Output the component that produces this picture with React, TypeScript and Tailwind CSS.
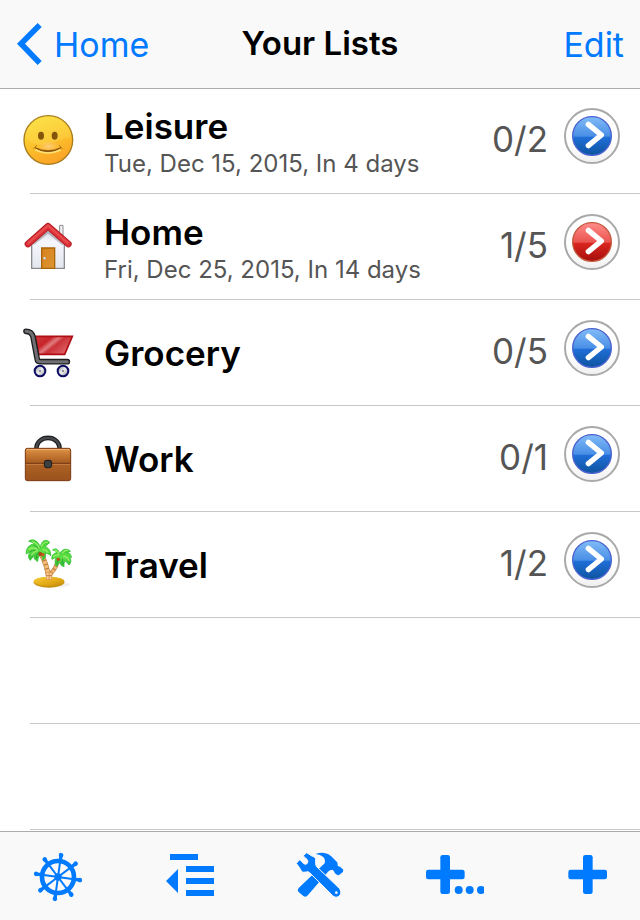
import type { ReactNode } from "react";

interface ListInfo {
  name: string;
  due?: string;
  count: string;
  urgent?: boolean;
  icon: ReactNode;
  viewBox: string;
}

const SmileyIcon = () => (
  <>
    <defs>
      <linearGradient id="smiley-face" x1="0.3" y1="0" x2="0.65" y2="1">
        <stop offset="0" stopColor="#fbe03a" />
        <stop offset="0.5" stopColor="#fbc22b" />
        <stop offset="1" stopColor="#fba026" />
      </linearGradient>
      <radialGradient id="smiley-glow" cx="0.5" cy="0.5" r="0.5">
        <stop offset="0" stopColor="#ffd18a" stopOpacity="0.9" />
        <stop offset="1" stopColor="#ffc45a" stopOpacity="0" />
      </radialGradient>
    </defs>
    <circle cx="115" cy="120" r="73" fill="url(#smiley-face)" stroke="#a87c1c" strokeWidth="4" />
    <path d="M46 112a69 64 0 0 1 138 0c-34 2-54 22-88 22-24 0-40-8-50-22z" fill="#ffe96a" opacity="0.25" />
    <ellipse cx="116" cy="139" rx="34" ry="18" fill="url(#smiley-glow)" />
    <ellipse cx="93" cy="107" rx="11" ry="14" fill="#f3d24a" />
    <ellipse cx="134" cy="107" rx="11" ry="14" fill="#f3d24a" />
    <ellipse cx="93" cy="107" rx="9" ry="12" fill="#865408" />
    <ellipse cx="134" cy="107" rx="9" ry="12" fill="#865408" />
    <path d="M76 150q38 17 76 0" fill="none" stroke="#ffe27a" strokeWidth="5" />
    <path d="M71 146l9-10M148 136l9 10" stroke="#a8751c" strokeWidth="2.5" strokeLinecap="round" />
    <path d="M75 143q39 18 78 0q-39 24-78 0z" fill="#7c4c0a" stroke="#7c4c0a" strokeWidth="2" strokeLinejoin="round" />
  </>
);

const HouseIcon = () => (
  <>
    <defs>
      <linearGradient id="house-wall" x1="0" y1="0" x2="0" y2="1">
        <stop offset="0" stopColor="#cfd2dc" />
        <stop offset="0.35" stopColor="#f6f7fd" />
        <stop offset="1" stopColor="#e4e6f0" />
      </linearGradient>
      <linearGradient id="house-door" x1="0" y1="0" x2="1" y2="1">
        <stop offset="0" stopColor="#d8801c" />
        <stop offset="1" stopColor="#dc9734" />
      </linearGradient>
    </defs>
    <path d="M149 86V58h10v36" fill="#f4f4f6" stroke="#8c8c8e" strokeWidth="3" />
    <path d="M65 187v-81l49-41 49 41v81z" fill="url(#house-wall)" stroke="#8a8b90" strokeWidth="4" />
    <path d="M70 114l44-36 45 37" fill="none" stroke="#8c8d98" strokeWidth="7" opacity="0.55" />
    <path d="M54 114L114 61L175 114" fill="none" stroke="#b01c22" strokeWidth="20" strokeLinecap="round" strokeLinejoin="round" />
    <path d="M54 114L114 61L175 114" fill="none" stroke="#d92f34" strokeWidth="15" strokeLinecap="round" strokeLinejoin="round" />
    <path d="M55 111L114 59L173 111" fill="none" stroke="#e84b4f" strokeWidth="7" strokeLinecap="round" strokeLinejoin="round" />
    <path d="M95 187v-61h39v61z" fill="url(#house-door)" stroke="#a86508" strokeWidth="4" />
    <circle cx="104" cy="157" r="4" fill="#b9bcc8" />
    <circle cx="103" cy="156" r="2" fill="#fff" />
  </>
);

const CartIcon = () => (
  <>
    <defs>
      <linearGradient id="cart-basket" x1="0" y1="0" x2="1" y2="0.6">
        <stop offset="0" stopColor="#cf3a3e" />
        <stop offset="0.35" stopColor="#c7242a" />
        <stop offset="0.5" stopColor="#e07d80" />
        <stop offset="0.62" stopColor="#ca3338" />
        <stop offset="1" stopColor="#de6266" />
      </linearGradient>
      <linearGradient id="cart-wheel" x1="0" y1="0" x2="1" y2="1">
        <stop offset="0" stopColor="#8d8d92" />
        <stop offset="0.5" stopColor="#ededee" />
        <stop offset="1" stopColor="#8d8d92" />
      </linearGradient>
    </defs>
    <path d="M76 73H187L164 127H86z" fill="url(#cart-basket)" stroke="#b00d14" strokeWidth="5" />
    <path d="M48 58c12 0 18 6 21 16l13 69c1 6 4 6 10 6h80" fill="none" stroke="#1f1f21" strokeWidth="17" strokeLinecap="round" strokeLinejoin="round" />
    <path d="M48 58c12 0 18 6 21 16l13 69c1 6 4 6 10 6h80" fill="none" stroke="#707074" strokeWidth="9" strokeLinecap="round" strokeLinejoin="round" />
    <circle cx="90" cy="177" r="16" fill="url(#cart-wheel)" stroke="#0b0b62" strokeWidth="6" />
    <circle cx="159" cy="177" r="16" fill="url(#cart-wheel)" stroke="#0b0b62" strokeWidth="6" />
    <circle cx="90" cy="177" r="3" fill="#77777c" />
    <circle cx="159" cy="177" r="3" fill="#77777c" />
  </>
);

const BriefcaseIcon = () => (
  <>
    <defs>
      <linearGradient id="case-top" x1="0" y1="0" x2="0" y2="1">
        <stop offset="0" stopColor="#e0964e" />
        <stop offset="0.3" stopColor="#cd8038" />
        <stop offset="1" stopColor="#a65c20" />
      </linearGradient>
      <linearGradient id="case-bottom" x1="0" y1="0" x2="0" y2="1">
        <stop offset="0" stopColor="#bd722e" />
        <stop offset="1" stopColor="#9b521c" />
      </linearGradient>
    </defs>
    <path d="M79 88c0-46 70-46 70 0" fill="none" stroke="#1d1e20" strokeWidth="14" />
    <path d="M79 88c0-46 70-46 70 0" fill="none" stroke="#47494c" strokeWidth="7" />
    <rect x="46" y="85" width="136" height="97" rx="6" fill="url(#case-bottom)" />
    <path d="M46 130V91q0-6 6-6h124q6 0 6 6v39z" fill="url(#case-top)" />
    <path d="M50 88h128" stroke="#f2b67a" strokeWidth="3" />
    <path d="M46 130h136" stroke="#6a2f0b" strokeWidth="3" />
    <path d="M48 133h132" stroke="#d69353" strokeWidth="2" />
    <rect x="46" y="85" width="136" height="97" rx="6" fill="none" stroke="#7a3a12" strokeWidth="3" />
    <rect x="103" y="121" width="22" height="22" rx="7" fill="#3c3f43" stroke="#17181a" strokeWidth="3" />
  </>
);

const PalmIcon = () => (
  <>
    <defs>
      <linearGradient id="palm-sand" x1="0" y1="0" x2="1" y2="1">
        <stop offset="0" stopColor="#f7cf38" />
        <stop offset="0.6" stopColor="#e2a916" />
        <stop offset="1" stopColor="#bf8a0c" />
      </linearGradient>
      <linearGradient id="palm-leaf" x1="0" y1="0" x2="0" y2="1">
        <stop offset="0" stopColor="#3fd032" />
        <stop offset="0.5" stopColor="#62e048" />
        <stop offset="1" stopColor="#2bb034" />
      </linearGradient>
    </defs>
    <ellipse cx="135" cy="176" rx="45" ry="8" fill="#000" opacity="0.06" />
    <ellipse cx="117" cy="169" rx="46" ry="16" fill="#c4920f" />
    <ellipse cx="117" cy="166" rx="46" ry="14" fill="url(#palm-sand)" />
    <path d="M92 82q18 30 25 78" fill="none" stroke="#b8763a" strokeWidth="15" />
    <path d="M145 98q-4 26-24 46" fill="none" stroke="#b8763a" strokeWidth="12" />
    <path d="M92 82q18 30 25 78" fill="none" stroke="#f3bd78" strokeWidth="12" strokeDasharray="10 3" />
    <path d="M145 98q-4 26-24 46" fill="none" stroke="#f0b36c" strokeWidth="10" strokeDasharray="9 3" />
    <path d="M107 138h21l-2 24h-17z" fill="#dd954b" />
    <path d="M109 140h7v20h-6zM119 140h6l-1 20h-5z" fill="#f8cd94" />
    <path d="M108 149h18" stroke="#a8622a" strokeWidth="2" />
    <path
      d="M91 66C86 44 68 36 56 46C66 47 70 51 72 55C59 54 47 68 49 84C55 79 59 79 62 78C54 84 54 96 61 103C64 97 68 94 73 91C72 98 76 104 83 106C83 96 87 89 92 84C96 89 99 96 98 102C108 97 108 88 105 81C112 82 118 85 122 89C123 74 115 65 105 62C110 58 115 54 119 49C108 38 93 43 91 66z"
      fill="url(#palm-leaf)"
      stroke="#3cc638"
      strokeWidth="3"
      strokeLinejoin="round"
    />
    <path d="M66 46q17 6 22 22M56 70q14-8 30 0M94 62q7-16 20-13M64 88q8-12 20-14M99 70q10 2 15 10" fill="none" stroke="#b0f47c" strokeWidth="4" opacity="0.7" />
    <path d="M73 59q10 2 14 12M88 76q-9 7-9 20M59 77q10-5 17-3" fill="none" stroke="#1a9a2c" strokeWidth="3" opacity="0.75" />
    <circle cx="91" cy="84" r="6" fill="#a54715" />
    <circle cx="99" cy="86" r="5" fill="#cb5c1a" />
    <path
      d="M149 84C146 69 136 65 128 72C135 73 138 76 140 80C129 82 124 91 126 100C131 96 135 96 139 96C134 103 134 113 140 121C143 115 146 112 150 109C150 115 155 120 162 122C161 115 162 110 166 106C171 109 175 113 177 117C185 108 183 99 178 94C181 93 183 94 184 95C184 84 176 79 169 80C173 78 178 77 181 76C172 66 156 68 149 84z"
      fill="url(#palm-leaf)"
      stroke="#3cc638"
      strokeWidth="3"
      strokeLinejoin="round"
    />
    <path d="M134 72q11 4 14 14M130 92q9-7 17-4M156 82q8-11 18-9M160 90q15 3 17 15" fill="none" stroke="#b0f47c" strokeWidth="4" opacity="0.7" />
    <path d="M148 95q-8 7-7 17M157 97q-1 10 3 17" fill="none" stroke="#1a9a2c" strokeWidth="3" opacity="0.75" />
    <circle cx="145" cy="100" r="5" fill="#b94e16" />
  </>
);

const lists: ListInfo[] = [
  {
    name: "Leisure",
    due: "Tue, Dec 15, 2015, In 4 days",
    count: "0/2",
    icon: <SmileyIcon />,
    viewBox: "30 27 180 180",
  },
  {
    name: "Home",
    due: "Fri, Dec 25, 2015, In 14 days",
    count: "1/5",
    urgent: true,
    icon: <HouseIcon />,
    viewBox: "30 27 180 180",
  },
  { name: "Grocery", count: "0/5", icon: <CartIcon />, viewBox: "30 27 180 180" },
  { name: "Work", count: "0/1", icon: <BriefcaseIcon />, viewBox: "30 21 180 180" },
  { name: "Travel", count: "1/2", icon: <PalmIcon />, viewBox: "30 21 180 180" },
];

// keeps the separators running down to the toolbar
const emptyRows = [0, 1];

const spokes = [8, 53, 98, 143, 188, 233, 278, 323];

const tools = [
  {
    label: "Settings",
    viewBox: "84 78 180 180",
    icon: (
      <g transform="translate(174 171)">
        <circle r="48" fill="none" stroke="currentColor" strokeWidth="14" />
        <circle r="11" />
        {spokes.map((angle) => (
          <g key={angle} transform={`rotate(${angle})`}>
            <path d="M0-3h48v6H0z" />
            <path d="M50-5h14v10H50z" />
            <circle cx="66" r="7" />
          </g>
        ))}
      </g>
    ),
  },
  {
    label: "Outdent",
    viewBox: "480 78 180 180",
    icon: <path d="M510 102h84v18h-84zM558 138h84v18h-84zM558 174h84v18h-84zM558 210h84v18h-84zM534 147v72l-36-36z" />,
  },
  {
    label: "Tools",
    viewBox: "36 78 180 180",
    icon: (
      <>
        <path d="M107 102q14-5 26-3q12 1 20 9l18 18q3 5 2 12q6 1 9 4l8 7q0 8-5 10l-9 7q-8-1-11-6q-3-8-7-11q-9 0-14 6l-60 70q-6 8-14 3l-15-13q-4-5 1-11l78-74q3-11-4-19q-9-8-23-9z" />
        <path
          d="M70 107l10-9q8 5 14 9q7 2 13 8v16q0 6 4 10l67 64q7 8 4 17q-5 10-14 10q-7-1-11-6L89 158q-5-5-10-2l-11 1q-6-6-9-13l-10-14l10-11q6 4 12 12q8 4 11-1q4-6-1-12q-7-5-11-11z"
          stroke="#f9f9f9"
          strokeWidth="3"
        />
        <circle cx="169" cy="218" r="4" fill="#f9f9f9" />
      </>
    ),
  },
  {
    label: "Add several",
    viewBox: "432 78 180 180",
    icon: (
      <>
        <rect x="481" y="105" width="29" height="117" rx="7" />
        <rect x="438" y="149" width="116" height="29" rx="7" />
        <circle cx="536" cy="210" r="12" />
        <circle cx="569" cy="210" r="12" />
        <circle cx="603" cy="210" r="12" />
      </>
    ),
  },
  {
    label: "Add",
    viewBox: "828 78 180 180",
    icon: (
      <>
        <rect x="909" y="105" width="29" height="117" rx="7" />
        <rect x="865" y="149" width="116" height="29" rx="7" />
      </>
    ),
  },
];

function DisclosureButton({ name, urgent }: { name: string; urgent?: boolean }) {
  const colors = urgent
    ? { top: "#ff8d8a", mid: "#ea5550", low: "#d9261f", bottom: "#a50e0c", ring: "#c4593c" }
    : { top: "#82bcf8", mid: "#4a8fe6", low: "#1f6dd6", bottom: "#0e549f", ring: "#4a62cf" };

  return (
    <button type="button" aria-label={`Open ${name}`} className="mr-5 mb-1.5 size-14 shrink-0 rounded-full">
      <svg viewBox="0 0 168 168" className="size-full" aria-hidden="true">
        <defs>
          <linearGradient id={`${name}-fill`} x1="0" y1="0" x2="0" y2="1">
            <stop offset="0" stopColor={colors.top} />
            <stop offset="0.5" stopColor={colors.mid} />
            <stop offset="0.54" stopColor={colors.low} />
            <stop offset="1" stopColor={colors.bottom} />
          </linearGradient>
          <linearGradient id={`${name}-rim`} x1="0" y1="0" x2="0" y2="1">
            <stop offset="0.6" stopColor="#ffffff" />
            <stop offset="1" stopColor="#f0f0f0" />
          </linearGradient>
        </defs>
        <circle cx="84" cy="84" r="81" fill={`url(#${name}-rim)`} stroke="#a9a9a9" strokeWidth="6" />
        <circle cx="84" cy="84" r="58" fill={`url(#${name}-fill)`} stroke={colors.ring} strokeWidth="4" />
        <path d="M73 49L112 81L73 113" fill="none" stroke="#fff" strokeWidth="16" strokeLinecap="round" strokeLinejoin="round" />
      </svg>
    </button>
  );
}

function ListRow({ info }: { info: ListInfo }) {
  const { name, due, count, urgent, icon, viewBox } = info;

  return (
    <li className="flex h-[106px] items-center border-b border-[#c8c8c8] pb-[3px]">
      <svg viewBox={viewBox} className="-ml-2.5 size-15 shrink-0" aria-hidden="true">
        {icon}
      </svg>
      <div className={due ? "ml-6 min-w-0 flex-1 pt-2" : "ml-6 min-w-0 flex-1 pt-1"}>
        <div className="text-[35px] leading-10 font-semibold">{name}</div>
        {due && <div className="mt-0.5 text-2xl leading-8 text-[#555]">{due}</div>}
      </div>
      <div className="mr-4 text-[35px] text-[#555]">{count}</div>
      <DisclosureButton name={name} urgent={urgent} />
    </li>
  );
}

export default function App() {
  return (
    <div className="flex min-h-screen flex-col bg-white font-['Inter','Liberation_Sans',sans-serif] text-black">
      <header className="grid h-22 grid-cols-[1fr_auto_1fr] items-center bg-[#f9f9f9] px-4 text-[34px] shadow-[0_1px_0_#acacac]">
        <a href="#home" className="flex items-center gap-2.5 text-[#007aff]">
          <svg viewBox="48 66 84 132" className="h-11 w-7" fill="currentColor" aria-hidden="true">
            <path d="M113 69l12 12-50 50 50 52-12 12-62-64z" />
          </svg>
          Home
        </a>
        <h1 className="text-[33px] font-semibold">Your Lists</h1>
        <button type="button" className="justify-self-end text-[#007aff]">
          Edit
        </button>
      </header>

      <main className="flex-1">
        <ul className="pl-[30px]">
          {lists.map((info) => (
            <ListRow key={info.name} info={info} />
          ))}
          {emptyRows.map((row) => (
            <li key={row} aria-hidden="true" className="h-[106px] border-b border-[#c8c8c8]" />
          ))}
        </ul>
      </main>

      <nav className="flex h-[89px] items-center justify-between border-t border-[#acacac] bg-[#f9f9f9] pr-6 pl-7">
        {tools.map((tool) => (
          <button key={tool.label} type="button" aria-label={tool.label} className="size-15 text-[#007aff]">
            <svg viewBox={tool.viewBox} className="size-full" fill="currentColor" aria-hidden="true">
              {tool.icon}
            </svg>
          </button>
        ))}
      </nav>
    </div>
  );
}
